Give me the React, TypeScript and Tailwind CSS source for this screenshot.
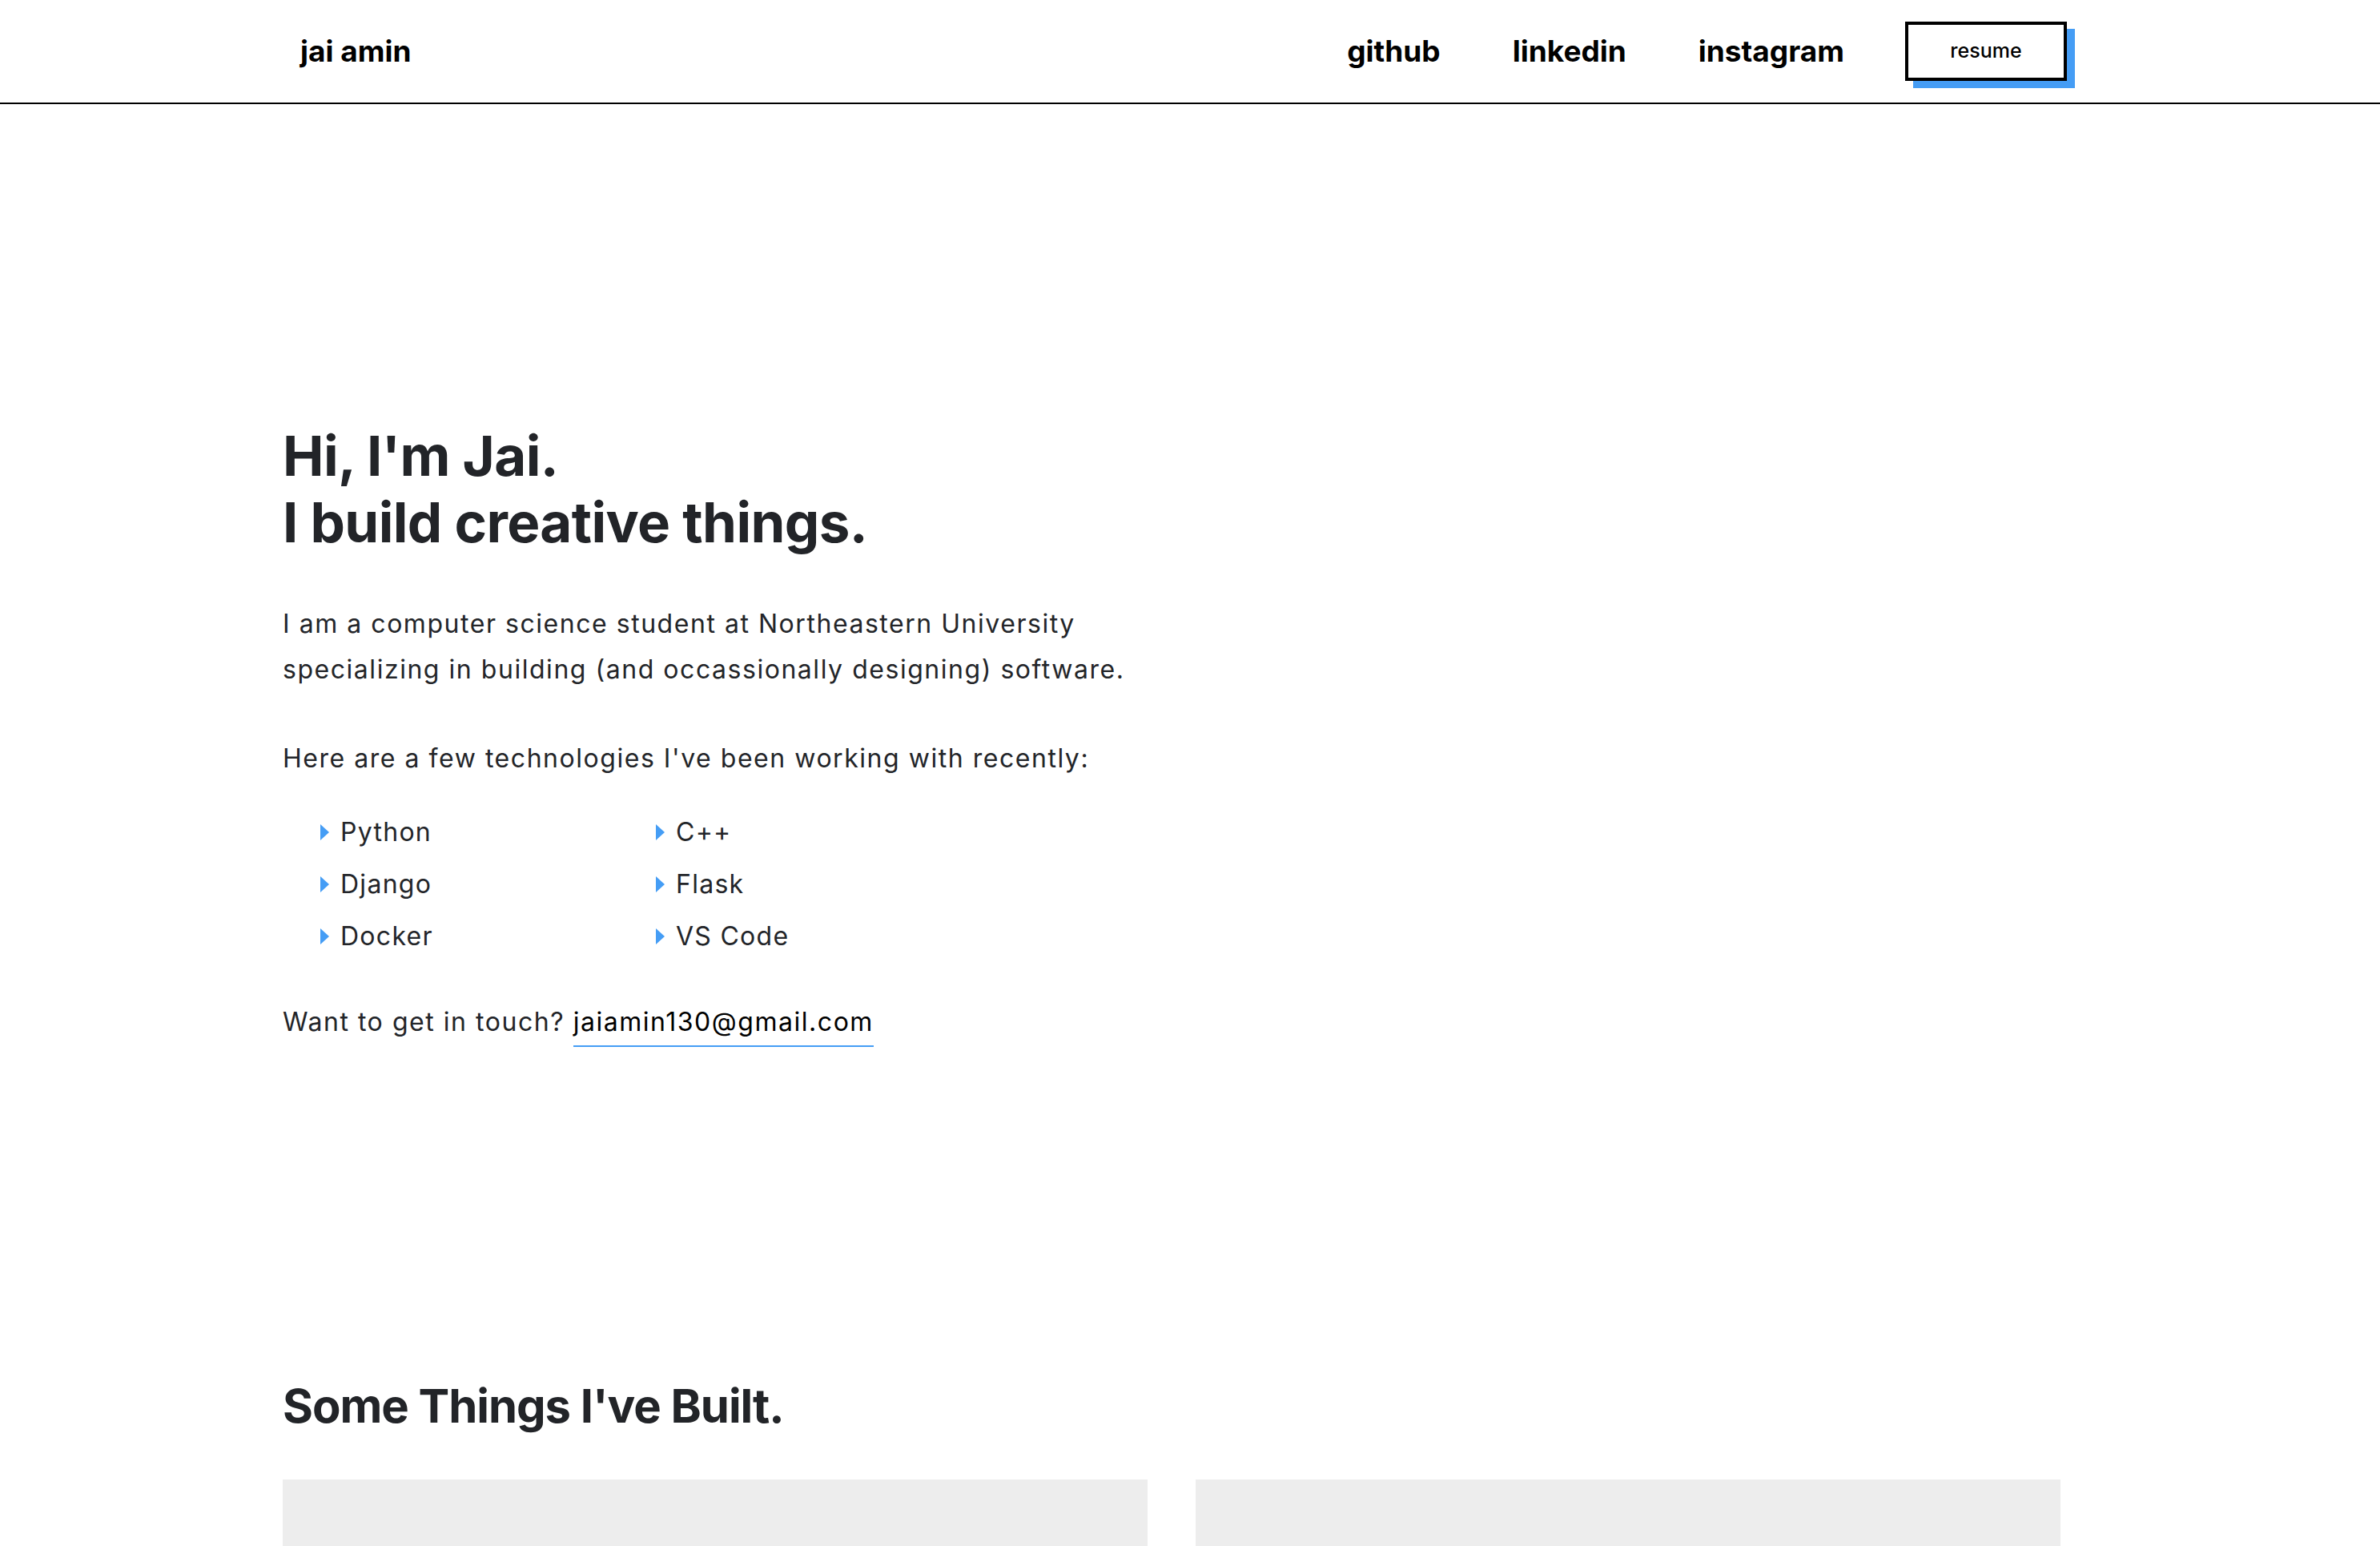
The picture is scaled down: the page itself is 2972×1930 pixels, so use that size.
import React from "react";

const techs = ["Python", "C++", "Django", "Flask", "Docker", "VS Code"];

function Tri() {
  return (
    <svg width="11" height="20" viewBox="0 0 11 20" className="shrink-0">
      <polygon points="0,0 11,10 0,20" fill="#459df5" />
    </svg>
  );
}

export default function App() {
  return (
    <div className="min-h-[1930px] bg-white font-['Inter',sans-serif] text-[#232529]">
      <nav className="flex h-[130px] items-center border-b-2 border-black pl-[375px] pr-[391px]">
        <a className="text-[37px] font-bold text-black">jai amin</a>
        <div className="ml-auto flex items-center">
          <a className="text-[37px] font-bold text-black">github</a>
          <a className="ml-[90px] text-[37px] font-bold text-black">linkedin</a>
          <a className="ml-[90px] text-[37px] font-bold text-black">instagram</a>
          <button className="ml-[76px] flex h-[74px] w-[202px] items-center justify-center border-4 border-black bg-white text-[25px] font-medium text-black shadow-[10px_9px_0_#459df5]">
            resume
          </button>
        </div>
      </nav>

      <main className="pl-[353px]">
        <section className="pt-[398px]">
          <h1 className="text-[69px] font-bold leading-[83px] tracking-[-0.009em] text-[#222428]">
            Hi, I'm Jai.
            <br />
            I build creative things.
          </h1>
          <p className="mt-[56px] text-[32px] leading-[57px] tracking-[0.048em]">
            I am a computer science student at Northeastern University
            <br />
            specializing in building (and occassionally designing) software.
          </p>
          <p className="mt-[54px] text-[32px] leading-[57px] tracking-[0.048em]">
            Here are a few technologies I've been working with recently:
          </p>
          <ul className="ml-[47px] mt-[31px] grid w-[838px] grid-cols-2">
            {techs.map((t) => (
              <li key={t} className="flex h-[65px] items-center gap-[14px] text-[32px] tracking-[0.04em]">
                <Tri />
                <span>{t}</span>
              </li>
            ))}
          </ul>
          <p className="mt-[46px] text-[32px] leading-[57px] tracking-[0.048em]">
            Want to get in touch?{" "}
            <a className="border-b-2 border-[#459df5] pb-[10px] text-black">jaiamin130@gmail.com</a>
          </p>
        </section>

        <section className="pt-[416px]">
          <h2 className="text-[58px] font-bold leading-[71px] tracking-[-0.018em] text-[#222428]">Some Things I've Built.</h2>
          <div className="mt-[56px] grid w-[2220px] grid-cols-2 gap-[60px]">
            <div className="h-[84px] bg-[#ededed]" />
            <div className="h-[84px] bg-[#ededed]" />
          </div>
        </section>
      </main>
    </div>
  );
}
